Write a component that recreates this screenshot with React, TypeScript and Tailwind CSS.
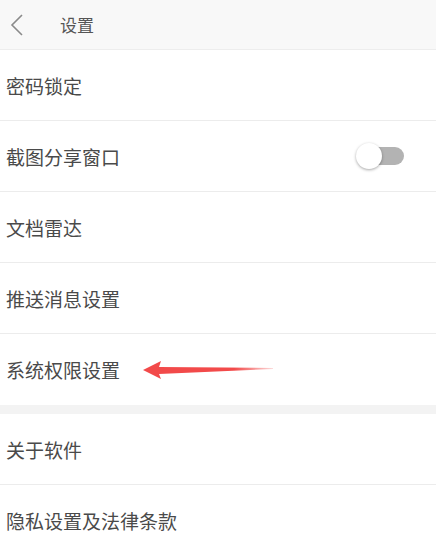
import React, { useState } from 'react';

const font = { fontFamily: '"Noto Sans CJK SC", "Noto Sans", sans-serif' };

const Row = ({ label, last, children }: { label: string; last?: boolean; children?: React.ReactNode }) => (
  <div className={`relative flex items-center h-[71px] pl-[6px] pr-[30px] bg-white ${last ? '' : 'border-b border-[#ececec]'}`}>
    <span className="flex-1 text-[19px] text-[#4a4a4a] leading-none">{label}</span>
    {children}
  </div>
);

const Toggle = ({ on, onChange }: { on: boolean; onChange: () => void }) => (
  <button onClick={onChange} className="relative w-[50px] h-[26px] flex items-center">
    <span className="absolute left-[10px] right-[2px] h-[18px] rounded-full bg-[#b3b3b3]" />
    <span
      className={`absolute top-0 w-[26px] h-[26px] rounded-full bg-white shadow-[0_1px_3px_rgba(0,0,0,0.35)] ${on ? 'left-[24px]' : 'left-0'}`}
    />
  </button>
);

const Arrow = () => (
  <svg className="absolute left-[141px] top-[26px]" width="134" height="20" viewBox="0 0 134 20">
    <defs>
      <linearGradient id="tail" x1="0" x2="1" y1="0" y2="0">
        <stop offset="0" stopColor="#f24a4a" />
        <stop offset="0.7" stopColor="#f24a4a" />
        <stop offset="1" stopColor="#f24a4a" stopOpacity="0.2" />
      </linearGradient>
    </defs>
    <path d="M2 10 L20 1 L18 7 L132 8 L132 9 L18 14 L20 19 Z" fill="url(#tail)" />
  </svg>
);

export default function App() {
  const [share, setShare] = useState(false);

  return (
    <div className="w-[436px] h-[541px] overflow-hidden bg-white" style={font}>
      <header className="flex items-center h-[50px] bg-[#f8f8f8] border-b border-[#ededed]">
        <svg className="ml-[10px]" width="14" height="22" viewBox="0 0 14 22">
          <path d="M12 1 L2 11 L12 21" fill="none" stroke="#8a8a8a" strokeWidth="1.6" />
        </svg>
        <span className="ml-[36px] text-[17px] text-[#555]">设置</span>
      </header>

      <Row label="密码锁定" />
      <Row label="截图分享窗口">
        <Toggle on={share} onChange={() => setShare(!share)} />
      </Row>
      <Row label="文档雷达" />
      <Row label="推送消息设置" />
      <Row label="系统权限设置" last>
        <Arrow />
      </Row>

      <div className="h-[9px] bg-[#f3f3f3]" />

      <Row label="关于软件" />
      <Row label="隐私设置及法律条款" last />
    </div>
  );
}
